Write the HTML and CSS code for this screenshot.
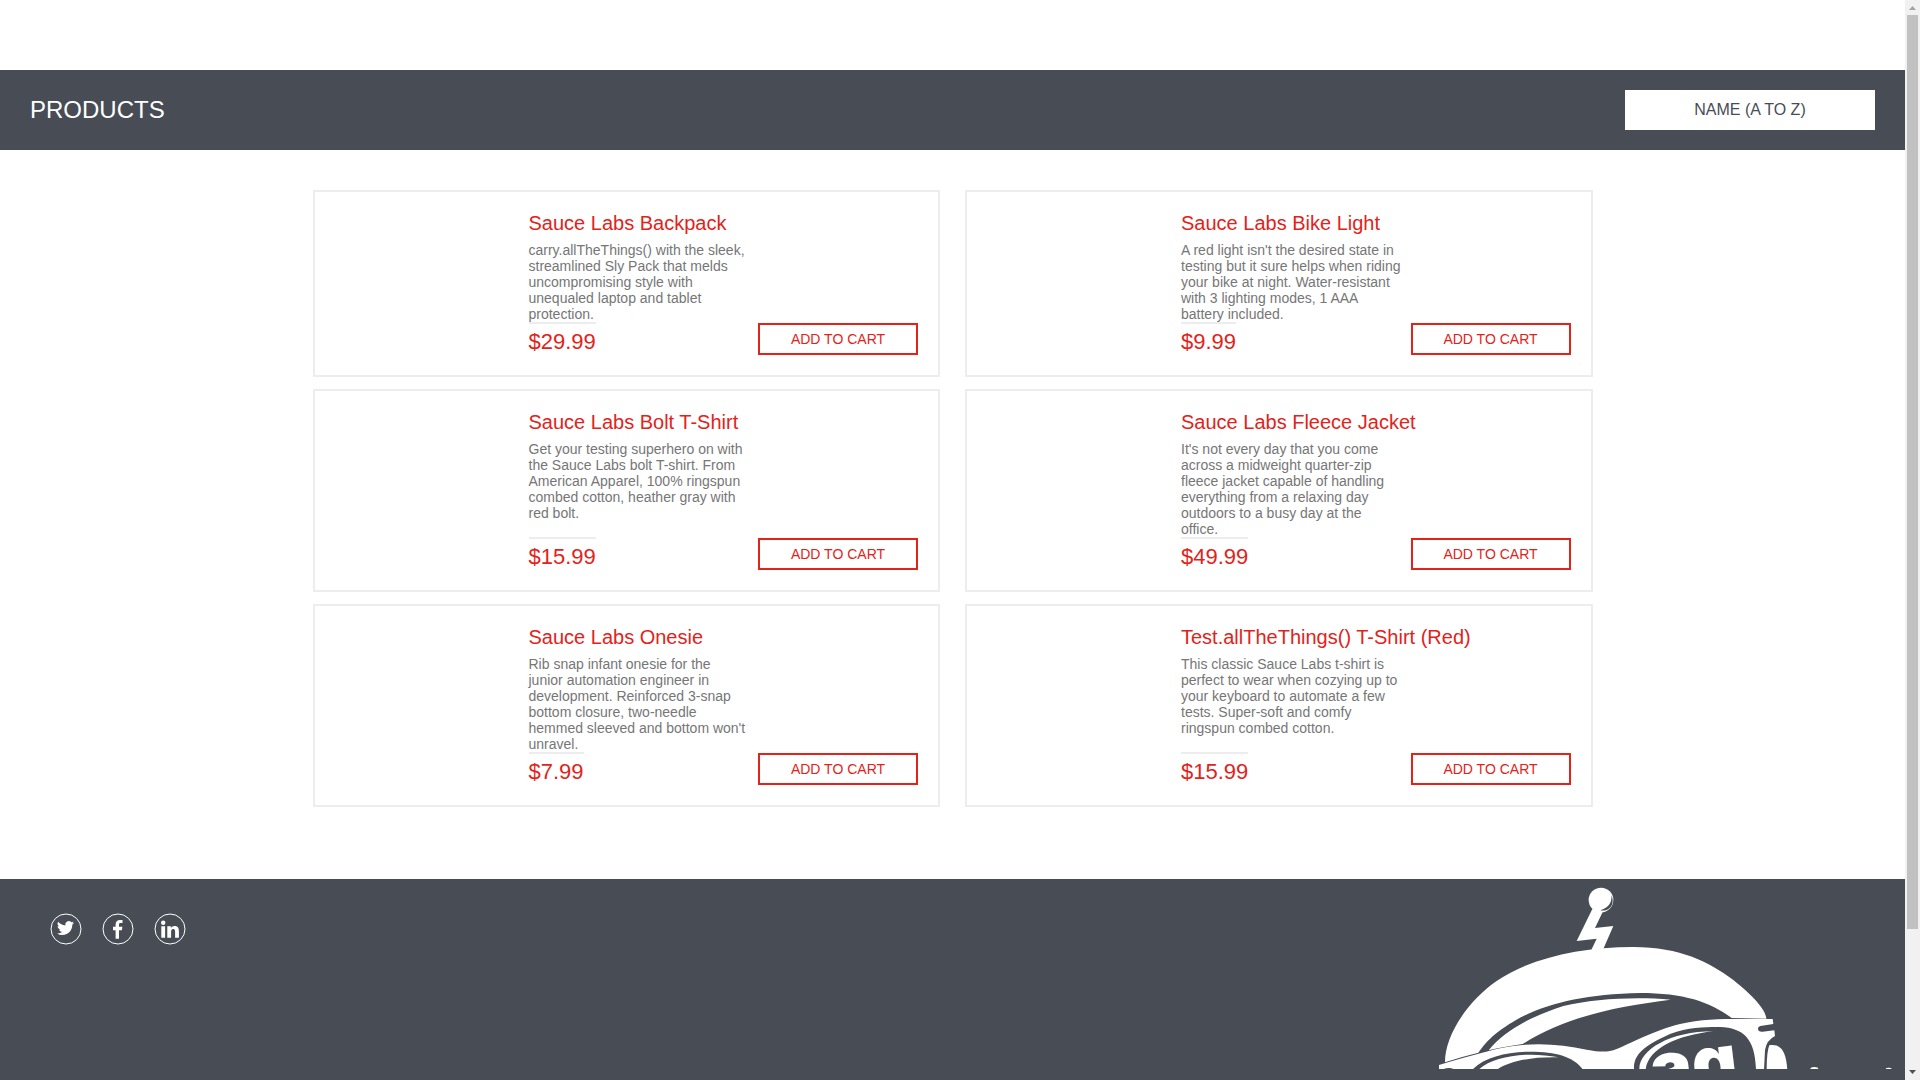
FILE: index.html
```html
<!DOCTYPE html>
<html lang="en">
<head>
<meta charset="utf-8">
<meta name="viewport" content="width=device-width, initial-scale=1">
<title>Swag Labs</title>
<link rel="stylesheet" href="styles.css">
</head>
<body>
<div class="page">
  <header class="header">
    <div class="header-top"></div>
    <div class="header-bar">
      <h1 class="title">Products</h1>
      <select class="sort" aria-label="Sort products">
        <option>Name (A to Z)</option>
        <option>Name (Z to A)</option>
        <option>Price (low to high)</option>
        <option>Price (high to low)</option>
      </select>
    </div>
  </header>

  <main class="inventory">
    <article class="item">
      <a class="item-name" href="#backpack">Sauce Labs Backpack</a>
      <p class="item-desc">carry.allTheThings() with the sleek, streamlined Sly Pack that melds uncompromising style with unequaled laptop and tablet protection.</p>
      <div class="pricebar"><div class="price">$29.99</div><button class="add" type="button">Add to cart</button></div>
    </article>
    <article class="item">
      <a class="item-name" href="#bike-light">Sauce Labs Bike Light</a>
      <p class="item-desc">A red light isn't the desired state in testing but it sure helps when riding your bike at night. Water-resistant with 3 lighting modes, 1 AAA battery included.</p>
      <div class="pricebar"><div class="price">$9.99</div><button class="add" type="button">Add to cart</button></div>
    </article>
    <article class="item">
      <a class="item-name" href="#bolt-shirt">Sauce Labs Bolt T-Shirt</a>
      <p class="item-desc">Get your testing superhero on with the Sauce Labs bolt T-shirt. From American Apparel, 100% ringspun combed cotton, heather gray with red bolt.</p>
      <div class="pricebar"><div class="price">$15.99</div><button class="add" type="button">Add to cart</button></div>
    </article>
    <article class="item">
      <a class="item-name" href="#fleece-jacket">Sauce Labs Fleece Jacket</a>
      <p class="item-desc">It's not every day that you come across a midweight quarter-zip fleece jacket capable of handling everything from a relaxing day outdoors to a busy day at the office.</p>
      <div class="pricebar"><div class="price">$49.99</div><button class="add" type="button">Add to cart</button></div>
    </article>
    <article class="item">
      <a class="item-name" href="#onesie">Sauce Labs Onesie</a>
      <p class="item-desc">Rib snap infant onesie for the junior automation engineer in development. Reinforced 3-snap bottom closure, two-needle hemmed sleeved and bottom won't unravel.</p>
      <div class="pricebar"><div class="price">$7.99</div><button class="add" type="button">Add to cart</button></div>
    </article>
    <article class="item">
      <a class="item-name" href="#red-shirt">Test.allTheThings() T-Shirt (Red)</a>
      <p class="item-desc">This classic Sauce Labs t-shirt is perfect to wear when cozying up to your keyboard to automate a few tests. Super-soft and comfy ringspun combed cotton.</p>
      <div class="pricebar"><div class="price">$15.99</div><button class="add" type="button">Add to cart</button></div>
    </article>
  </main>

  <footer class="footer">
    <nav class="social">
      <a class="social-link" href="#twitter" aria-label="Twitter">
        <svg viewBox="0 0 32 32" width="32" height="32"><circle class="ring" cx="16" cy="16" r="15"/><path class="ink" transform="translate(7 6.600) scale(.71)" d="M23.95 4.57a10 10 0 0 1-2.82.77 4.96 4.96 0 0 0 2.16-2.72c-.95.56-2 .96-3.13 1.18a4.92 4.92 0 0 0-8.38 4.48C7.69 8.1 4.07 6.13 1.64 3.16a4.9 4.9 0 0 0 1.52 6.57 4.9 4.9 0 0 1-2.23-.61v.06a4.92 4.92 0 0 0 3.95 4.83 5 5 0 0 1-2.21.08 4.94 4.94 0 0 0 4.6 3.42A9.87 9.87 0 0 1 0 19.54a13.99 13.99 0 0 0 7.55 2.21c9.05 0 14-7.5 14-13.98 0-.21 0-.42-.02-.63a9.94 9.94 0 0 0 2.42-2.57z"/></svg>
      </a>
      <a class="social-link" href="#facebook" aria-label="Facebook">
        <svg viewBox="0 0 32 32" width="32" height="32"><circle class="ring" cx="16" cy="16" r="15"/><path class="ink" d="M13.6 25.7V17.2H11V13.7h2.6v-2.3c0-3 1.700-4.500 4.300-4.500 1.200 0 2.300.1 2.600.15v3h-1.800c-1.400 0-1.700.7-1.700 1.650v2h3.400l-.5 3.500h-2.900v8.500z"/></svg>
      </a>
      <a class="social-link" href="#linkedin" aria-label="LinkedIn">
        <svg viewBox="0 0 32 32" width="32" height="32"><circle class="ring" cx="16" cy="16" r="15"/><circle class="ink" cx="9.200" cy="9.800" r="2.200"/><path class="ink" d="M7.300 13.300h3.800v11.500H7.300zM13.300 13.300h3.600v1.600c.6-1.100 1.900-1.900 3.600-1.900 3.500 0 4.400 2.200 4.400 5.500v6.300h-3.800v-5.700c0-1.500-.2-3-1.900-3-1.800 0-2.100 1.400-2.100 2.900v5.800h-3.800z"/></svg>
      </a>
    </nav>
    <!-- Mascot: antenna, helmet, goggles -->
    <svg class="robot" viewBox="0 27 1455 570" width="485" height="190" role="img" aria-label="Swag bot">
      <g class="ink">
        <circle cx="543" cy="90" r="37"/>
        <path d="M517 117 548 126 525 174 580 168 549 239 512 244 530 206 470 213z"/>
        <path d="M75 577C74 500 140 395 230 333C330 265 480 231 640 231C780 231 870 277 940 330C1000 378 1038 420 1039 446L935 444C870 395 790 369 660 369C500 372 390 398 300 443C235 480 205 505 175 548Q125 560 75 577z"/>
        <path d="M206 541C250 485 330 440 430 408C520 386 650 379 752 389C600 408 440 438 308 522Q250 530 206 541z"/>
        <path d="M57 585Q175 550 240 535C340 514 420 523 500 539C540 546 562 548 590 537C630 521 700 482 780 462C840 448 900 447 960 447L1058 447 1060 462 1026 467Q1014 468 1014 476 1014 486 1028 485L1063 481 1065 498Q1040 510 1035 540L1032 600H57z"/>
        <path d="M1040 600Q1040 545 1048 526C1082 521 1098 542 1102 600z"/>
      </g>
      <g class="shade">
        <path d="M574 76C577 99 564 114 541 121C557 124 570 117 576 104Q581 91 574 76z"/>
        <path d="M158 598C195 561 260 546 330 545C410 545 460 560 488 598z"/>
        <path d="M642 598C640 555 670 528 750 492C810 470 860 471 900 471C970 474 1005 505 1008 598z"/>
        <path d="M68 598Q88 590 103 598z"/>
      </g>
      <g class="ink">
        <path d="M177 598C220 559 320 543 416 562C330 560 270 574 232 598z"/>
        <path d="M658 598C657 540 750 484 880 484C770 496 686 535 677 598z"/>
        <text class="robot-text" x="700" y="671" transform="rotate(-7 700 671)">ag</text>
        <ellipse cx="1183" cy="597" rx="12" ry="6"/>
        <ellipse cx="1406" cy="597" rx="9" ry="4"/>
      </g>
    </svg>
  </footer>
</div>
<div class="scrollbar" aria-hidden="true">
  <svg class="arrow arrow-up" viewBox="0 0 15 15" width="15" height="15"><path d="M4 10h7L7.500 6z"/></svg>
  <div class="track"><div class="thumb"></div></div>
  <svg class="arrow arrow-down" viewBox="0 0 15 15" width="15" height="15"><path d="M4 5h7L7.500 9z"/></svg>
</div>
</body>
</html>
```
FILE: styles.css
```css
* {
  box-sizing: border-box;
}

body {
  display: flex;
  height: 100vh;
  margin: 0;
  font-family: "Liberation Sans", Arial, sans-serif;
  color: #474c55;
  background: #fff;
}

.page {
  flex: 1;
  min-width: 0;
  overflow-y: auto;
  scrollbar-width: none;
}

.scrollbar {
  display: flex;
  flex-direction: column;
  width: 15px;
  background: #f1f1f1;
}

.arrow {
  display: block;
}

.arrow-up {
  fill: #a3a3a3;
}

.arrow-down {
  fill: #505050;
}

.track {
  flex: 1;
  padding: 0 2px;
}

.thumb {
  height: 87%;
  background: #c1c1c1;
}

.header-top {
  height: 70px;
}

.header-bar {
  display: flex;
  align-items: center;
  justify-content: space-between;
  padding: 20px 30px;
  background: #474c55;
}

.title {
  margin: 0;
  font-size: 24px;
  font-weight: 400;
  line-height: 28px;
  text-transform: uppercase;
  color: #fff;
}

.sort {
  width: 250px;
  height: 40px;
  padding: 0 0 2px;
  border: 0;
  border-radius: 0;
  appearance: none;
  background: #fff;
  color: #474c55;
  font: 16px "Liberation Sans", Arial, sans-serif;
  text-transform: uppercase;
  text-align: center;
  text-align-last: center;
}

.inventory {
  display: grid;
  grid-template-columns: 1fr 1fr;
  gap: 12px 25px;
  max-width: 1280px;
  margin: 40px auto 72px;
}

.item {
  display: flex;
  flex-direction: column;
  align-items: flex-start;
  padding: 20px 20px 20px 214px;
  border: 2px solid #ededed;
}

.item-name {
  margin-bottom: 8px;
  font-size: 20px;
  line-height: 22px;
  color: #e2231a;
  text-decoration: none;
}

.item-desc {
  max-width: 220px;
  margin: 0;
  font-size: 14px;
  line-height: 16px;
  color: #767676;
}

.pricebar {
  display: flex;
  align-items: flex-end;
  justify-content: space-between;
  align-self: stretch;
  margin-top: auto;
}

.price {
  height: 33px;
  padding-top: 5px;
  border-top: 2px solid #ededed;
  font-size: 22px;
  line-height: 26px;
  color: #e2231a;
}

.add {
  width: 160px;
  height: 32px;
  padding: 0;
  border: 2px solid #e2231a;
  background: #fff;
  color: #e2231a;
  font: 14px "Liberation Sans", Arial, sans-serif;
  text-transform: uppercase;
}

.footer {
  display: flex;
  align-items: flex-start;
  justify-content: space-between;
  min-height: 360px;
  background: #474c55;
}

.social {
  display: flex;
  gap: 20px;
  padding: 34px 50px;
}

.social-link,
.social-link svg,
.robot {
  display: block;
}

.ring {
  fill: none;
  stroke: #fff;
}

.ink {
  fill: #fff;
}

.shade {
  fill: #474c55;
}

.robot-text {
  font-family: Inter, sans-serif;
  font-size: 210px;
  font-weight: 900;
}
```
